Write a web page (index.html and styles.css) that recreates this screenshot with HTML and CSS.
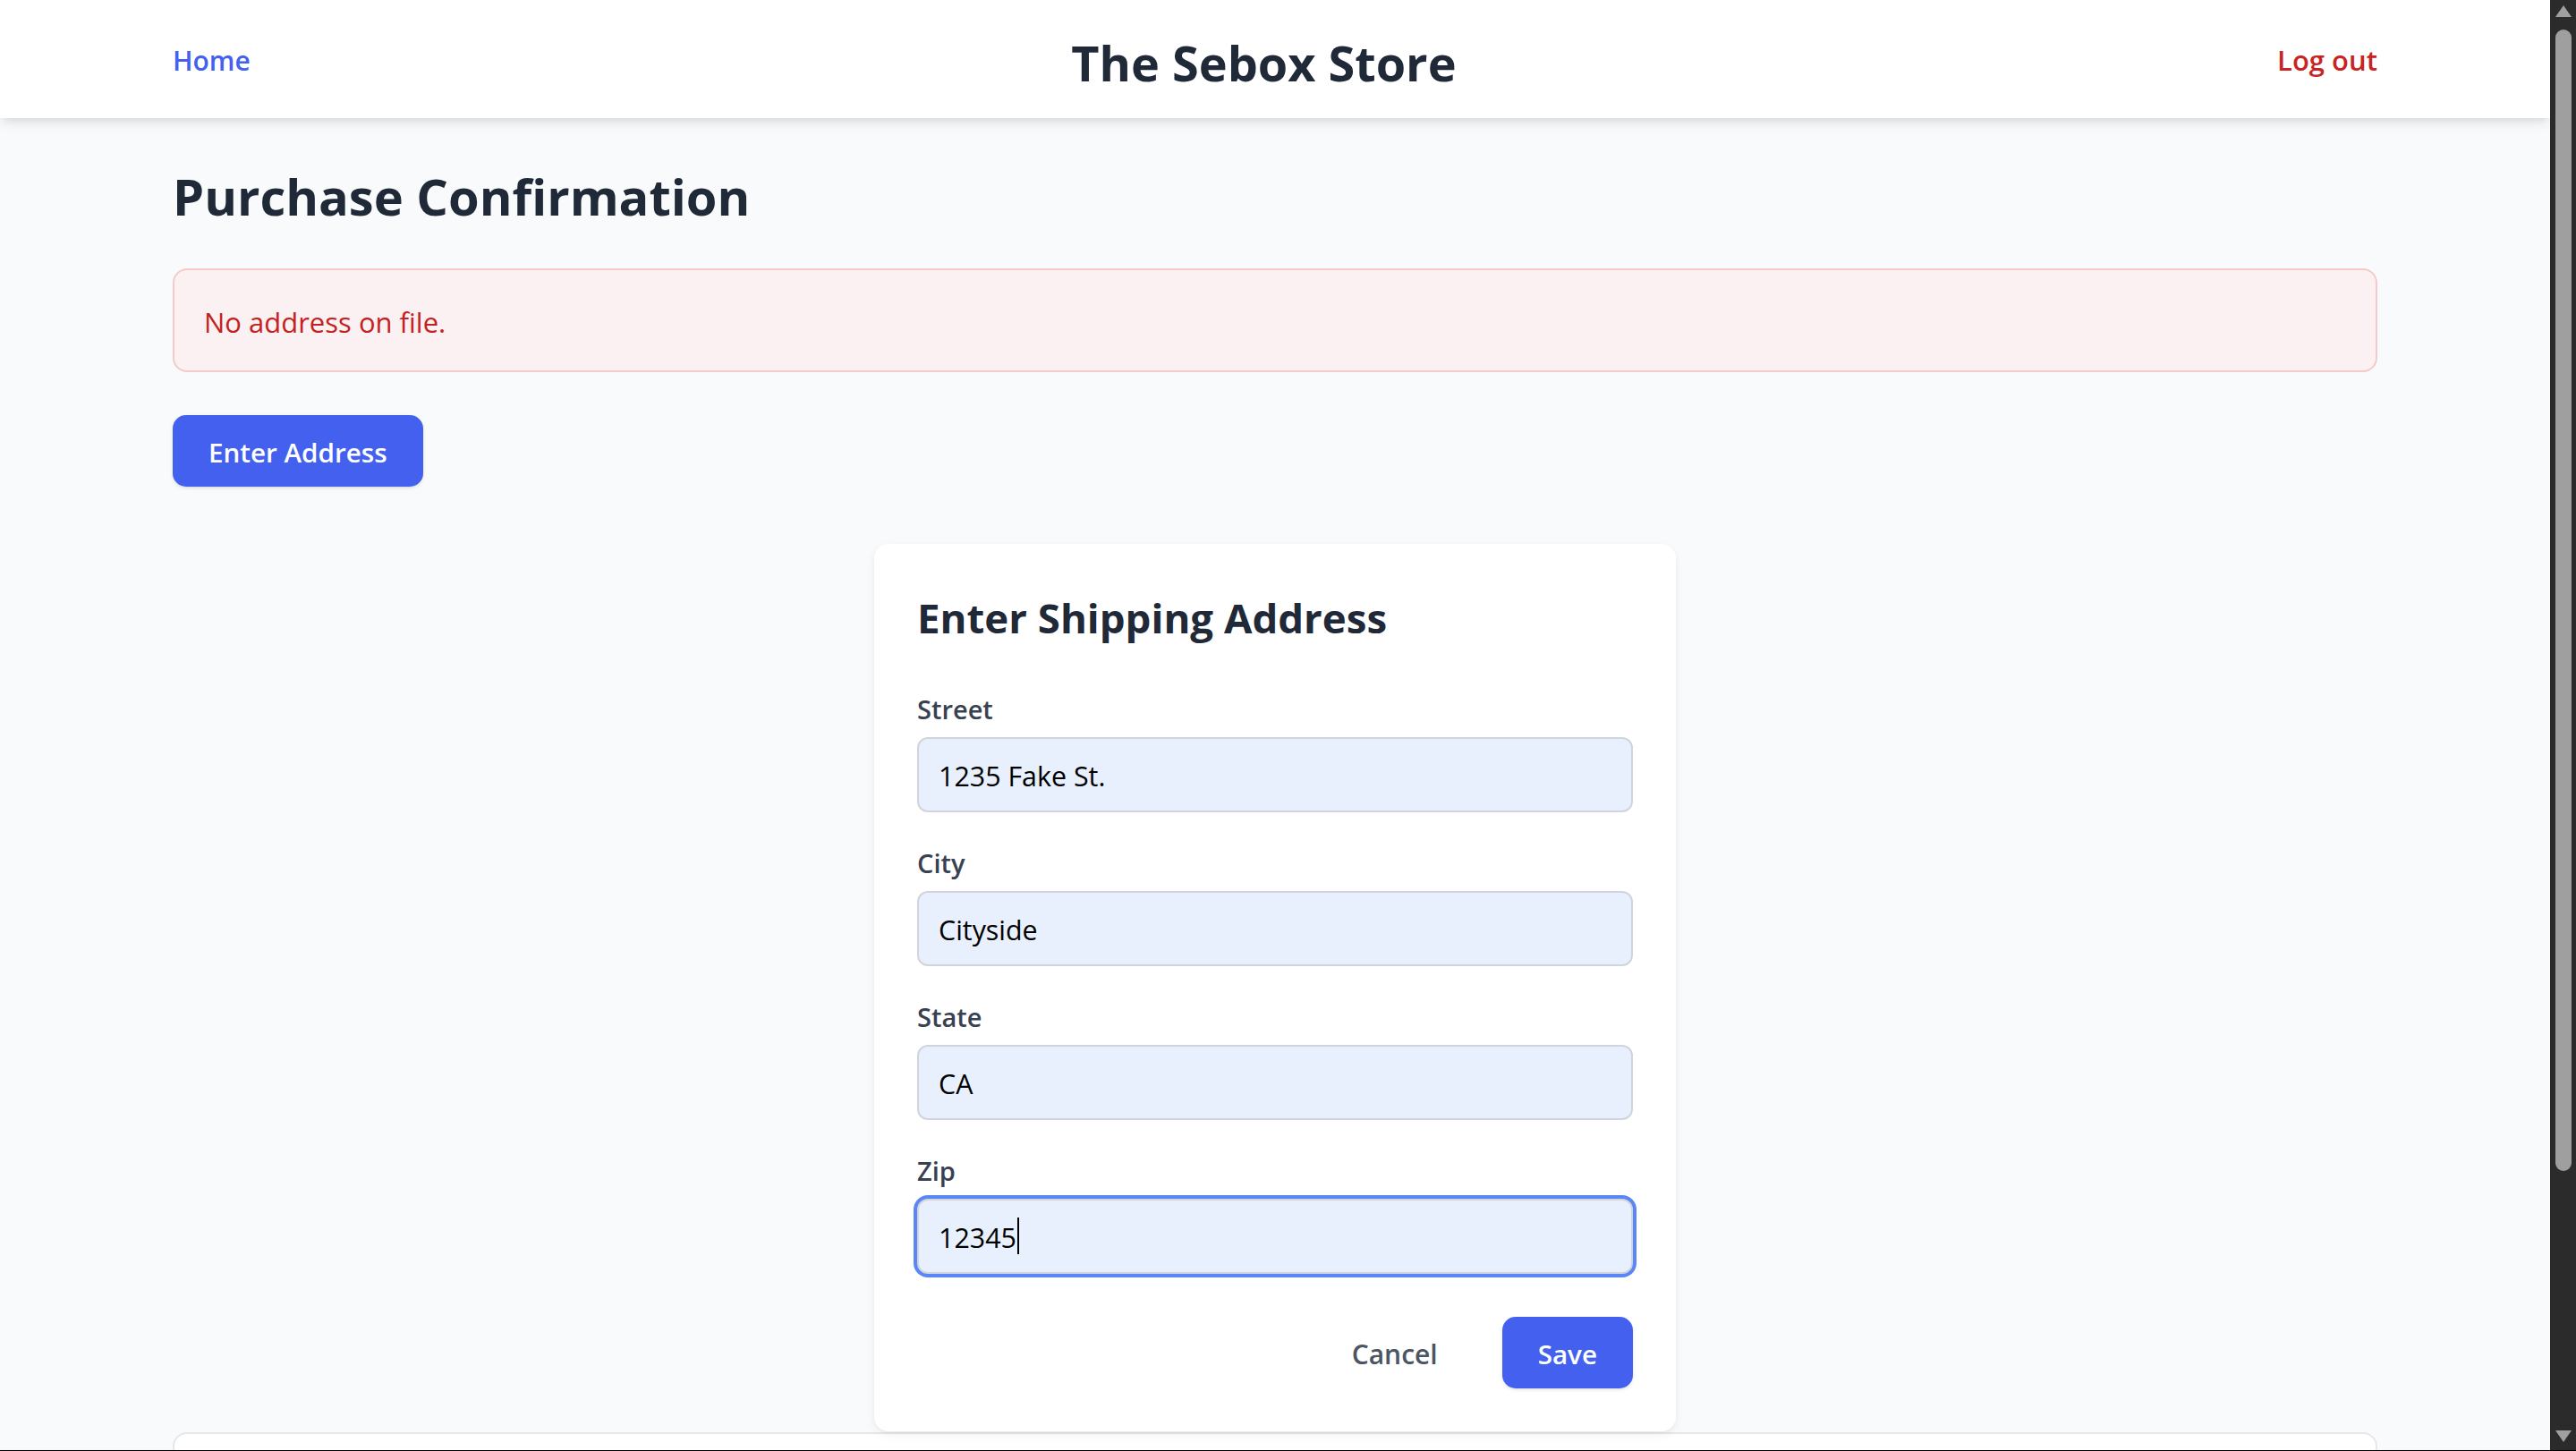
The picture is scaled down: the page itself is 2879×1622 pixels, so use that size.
FILE: index.html
```html
<!DOCTYPE html>
<html lang="en">
<head>
<meta charset="utf-8">
<title>The Sebox Store</title>
<link rel="stylesheet" href="styles.css">
</head>
<body>
<div class="screen">
  <div class="page">
    <header class="topbar">
      <div class="container bar">
        <a class="nav-home" href="#">Home</a>
        <h1 class="brand">The Sebox Store</h1>
        <a class="nav-logout" href="#">Log out</a>
      </div>
    </header>
    <main class="container main">
      <h2 class="page-title">Purchase Confirmation</h2>
      <div class="alert">No address on file.</div>
      <button class="btn btn-primary" type="button">Enter Address</button>
      <div class="modal-row">
        <form class="card">
          <h3 class="card-title">Enter Shipping Address</h3>
          <div class="fields">
            <div class="field">
              <label class="label">Street</label>
              <input class="input" type="text" value="1235 Fake St.">
            </div>
            <div class="field">
              <label class="label">City</label>
              <input class="input" type="text" value="Cityside">
            </div>
            <div class="field">
              <label class="label">State</label>
              <input class="input" type="text" value="CA">
            </div>
            <div class="field">
              <label class="label">Zip</label>
              <div class="input-wrap">
                <input class="input input-focus" type="text" value="12345">
                <span class="caret"></span>
              </div>
            </div>
          </div>
          <div class="actions">
            <button class="btn btn-cancel" type="button">Cancel</button>
            <button class="btn btn-primary" type="button">Save</button>
          </div>
        </form>
      </div>
      <section class="summary"></section>
    </main>
  </div>
  <div class="scrollbar">
    <span class="sb-up"></span>
    <span class="sb-thumb"></span>
    <span class="sb-fill"></span>
    <span class="sb-down"></span>
  </div>
</div>
<div class="bottom-line"></div>
</body>
</html>
```
FILE: styles.css
```css
* { box-sizing: border-box; }
html, body { margin: 0; padding: 0; height: 100%; overflow: hidden; }
body {
  font-family: "Open Sans", "Noto Sans", sans-serif;
  font-size: 31px;
  line-height: 48px;
  color: #1f2937;
  display: flex;
  flex-direction: column;
  background: #f9fafb;
}
.screen { flex: 1; display: flex; min-height: 0; }
.page { flex: 1; min-width: 0; overflow: hidden; background: #f9fafb; }
.bottom-line { height: 1px; background: #000; flex: none; }

.container { max-width: 2560px; margin: 0 auto; padding: 0 48px; }

/* header */
.topbar {
  height: 132px;
  background: #fff;
  display: flex;
  align-items: center;
  box-shadow: 0 8px 12px -2px rgba(0,0,0,0.09), 0 4px 8px -4px rgba(0,0,0,0.08);
  position: relative;
  z-index: 1;
}
.bar { width: 100%; display: flex; justify-content: space-between; align-items: center; }
.nav-home, .nav-logout { text-decoration: none; font-weight: 600; font-size: 30px; line-height: 48px; padding-top: 3px; }
.nav-home { color: #4361ee; }
.nav-logout { color: #c92424; font-size: 31px; padding-top: 1px; }
.brand { margin: 0; font-size: 54px; line-height: 72px; font-weight: 700; color: #1f2937; padding-top: 4px; height: 72px; }

/* main */
.main { padding-top: 48px; padding-bottom: 64px; }
.page-title { margin: 0 0 48px; font-size: 56px; line-height: 72px; font-weight: 700; color: #1f2937; padding-top: 3px; height: 72px; }
.alert {
  border: 2px solid #f6c9ca;
  background: #fcf1f2;
  border-radius: 16px;
  padding: 34px 33px 30px;
  color: #c42121;
  font-size: 31px;
  line-height: 48px;
  margin-bottom: 48px;
}
.btn {
  font-family: inherit;
  height: 80px;
  padding: 4px 40px 0;
  border: 0;
  border-radius: 15px;
  font-size: 29.6px;
  font-weight: 600;
  line-height: 48px;
  cursor: pointer;
}
.btn-primary {
  background: #4361ee;
  color: #fff;
  box-shadow: 0 2px 4px rgba(0,0,0,0.08), 0 1px 2px rgba(0,0,0,0.06);
}
.btn-cancel { background: transparent; color: #4b5563; font-size: 30px; }

.modal-row { display: flex; justify-content: center; margin-top: 64px; }
.card {
  width: 896px;
  background: #fff;
  border-radius: 16px;
  padding: 48px;
  box-shadow: 0 4px 12px rgba(0,0,0,0.05), 0 2px 4px rgba(0,0,0,0.03);
}
.card-title { margin: 0 0 48px; font-size: 45.6px; line-height: 64px; font-weight: 700; color: #1f2937; padding-top: 2px; height: 64px; }
.fields { display: flex; flex-direction: column; gap: 32px; }
.field { display: flex; flex-direction: column; }
.label { display: block; font-size: 29px; line-height: 40px; height: 40px; padding-top: 5px; font-weight: 600; color: #374151; margin-bottom: 16px; }
.input {
  display: block;
  width: 100%;
  height: 84px;
  border: 2px solid #d1d5db;
  border-radius: 12px;
  background: #e8f0fe;
  padding: 3px 22px 0;
  font-family: inherit;
  font-size: 30.4px;
  color: #000;
  outline: none;
}
.input-wrap { position: relative; }
.input-focus { box-shadow: 0 0 0 4px #5b87f6; }
.caret { position: absolute; left: 112px; top: 21px; width: 2px; height: 41px; background: #000; }

.actions { display: flex; justify-content: flex-end; gap: 32px; margin-top: 48px; }

.summary {
  margin-top: 1px;
  height: 320px;
  background: #fff;
  border: 2px solid #e5e7eb;
  border-radius: 16px;
}

/* scrollbar */
.scrollbar {
  width: 29px;
  flex: none;
  background: #2b2b2b;
  display: flex;
  flex-direction: column;
  align-items: center;
}
.sb-up {
  margin-top: 6px;
  width: 0; height: 0;
  border-left: 9px solid transparent;
  border-right: 9px solid transparent;
  border-bottom: 13px solid #9f9f9f;
}
.sb-thumb {
  margin-top: 14px;
  width: 18px;
  height: 1276px;
  border-radius: 9px;
  background: #9f9f9f;
}
.sb-fill { flex: 1; }
.sb-down {
  margin-bottom: 9px;
  width: 0; height: 0;
  border-left: 9px solid transparent;
  border-right: 9px solid transparent;
  border-top: 13px solid #9f9f9f;
}
```
